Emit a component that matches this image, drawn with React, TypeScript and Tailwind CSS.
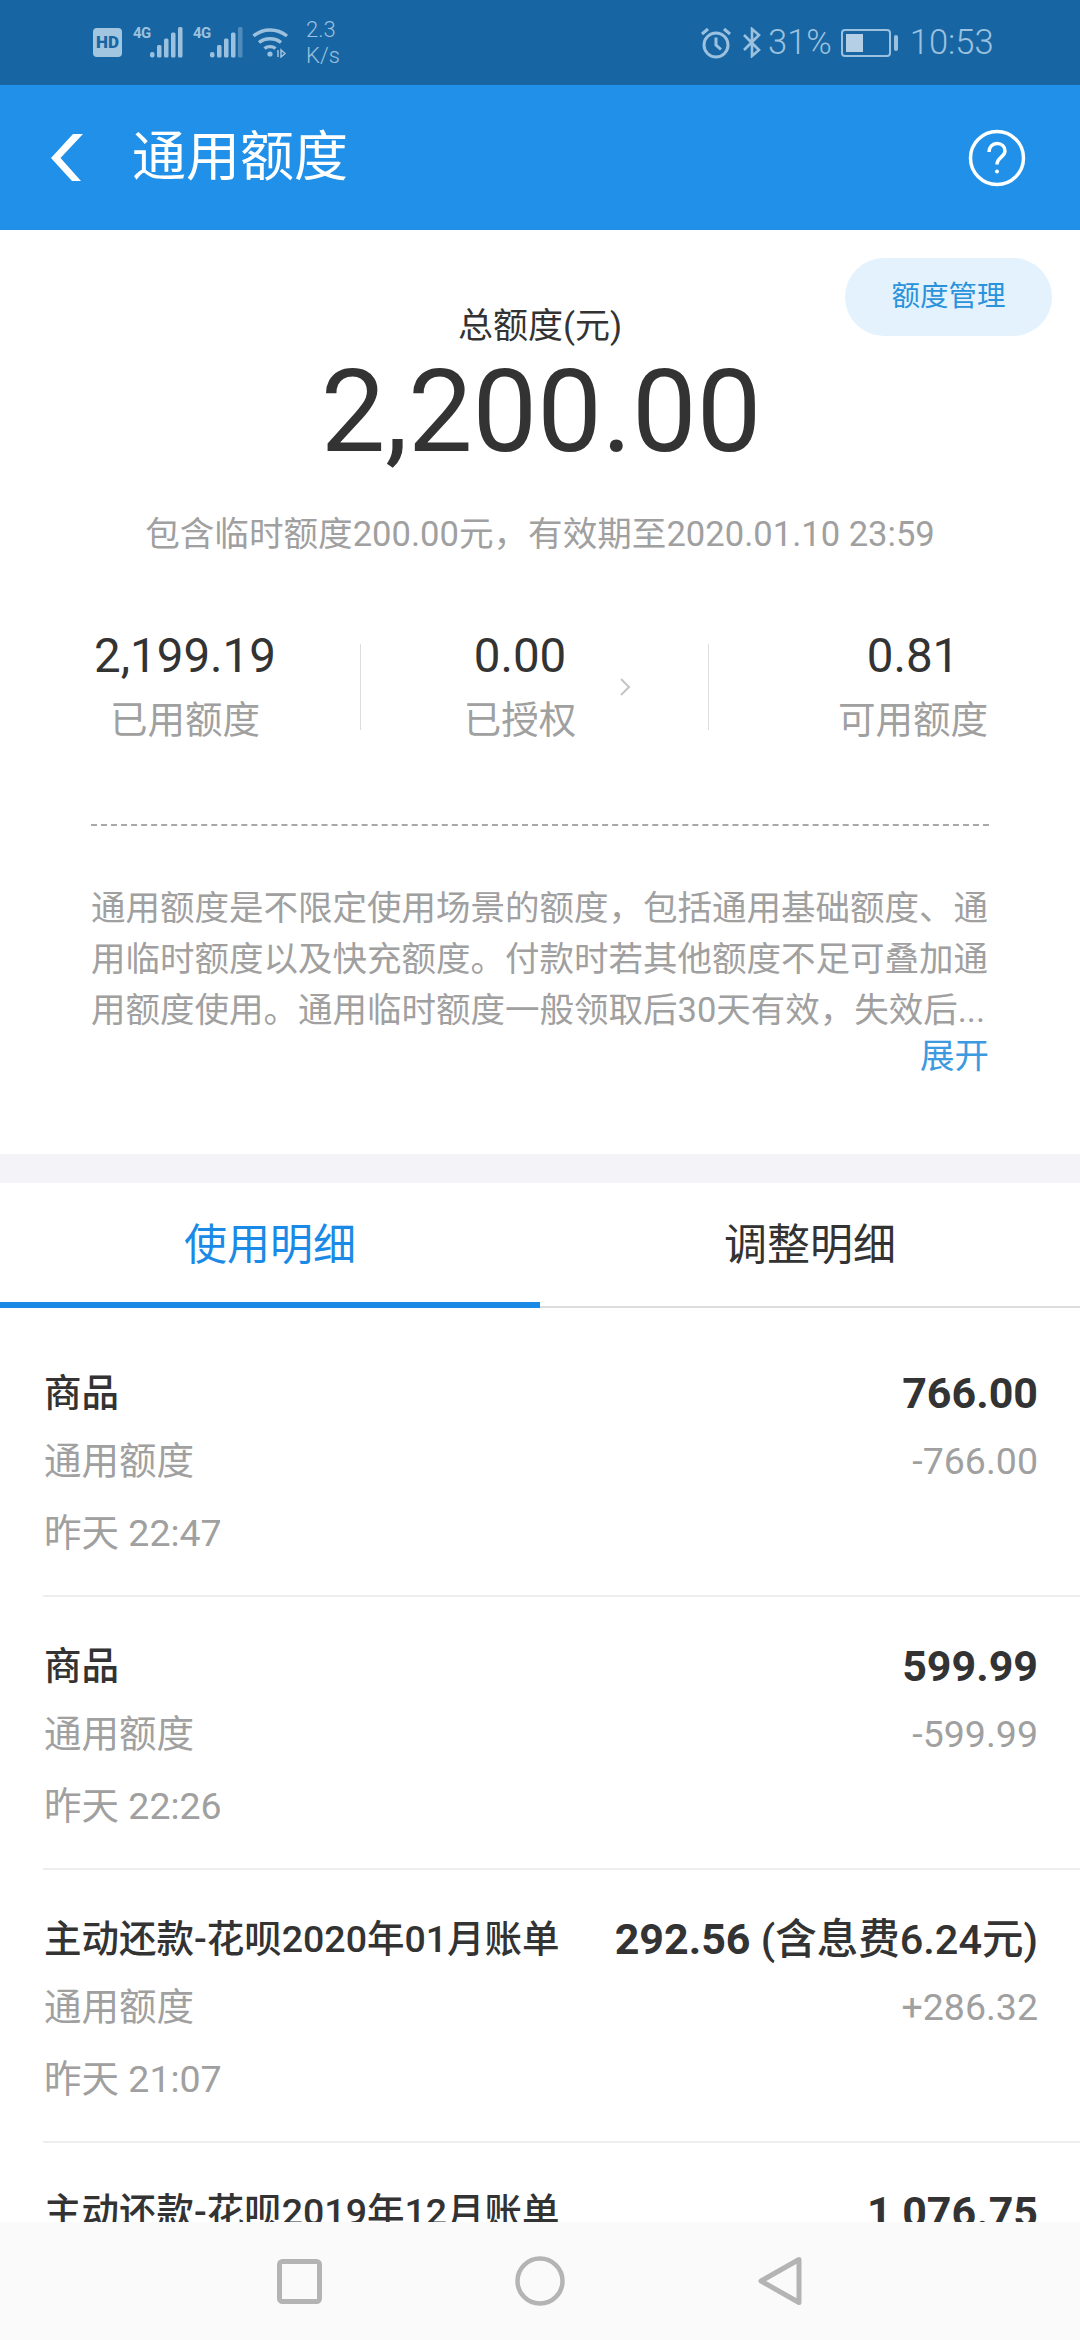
const rows = [
  { title: '商品', amount: '766.00', delta: '-766.00', time: '昨天 22:47' },
  { title: '商品', amount: '599.99', delta: '-599.99', time: '昨天 22:26' },
  { title: '主动还款-花呗2020年01月账单', amount: '292.56', note: ' (含息费6.24元)', delta: '+286.32', time: '昨天 21:07' },
  { title: '主动还款-花呗2019年12月账单', amount: '1,076.75' },
];

function Signal({ last }: { last: string }) {
  return (
    <div className="flex items-start">
      <span className="w-[17px] font-['Roboto'] text-[15px] leading-[15px] font-bold mt-[-1px] tracking-[-0.5px]">4G</span>
      <svg width="34" height="31" viewBox="0 0 34 31" fill="currentColor">
        <rect x="0" y="25" width="4.5" height="5.5" rx="2" />
        <rect x="7" y="18" width="4.5" height="12.5" rx="1.5" />
        <rect x="14" y="11.5" width="4.5" height="19" rx="1.5" />
        <rect x="21" y="5.5" width="4.5" height="25" rx="1.5" />
        <rect x="28" y="0" width="4.5" height="30.5" rx="1.5" fill={last} />
      </svg>
    </div>
  );
}

function StatusBar() {
  return (
    <div className="h-[85px] bg-[#1766a3] text-[#9cc1de] flex items-center font-['Roboto'] shrink-0">
      <div className="ml-[93px] w-[29px] h-[29px] rounded-[4px] bg-[#a3c6e0] text-[#1766a3] flex items-center justify-center text-[17px] font-black leading-none">HD</div>
      <div className="ml-[11px]"><Signal last="#9cc1de" /></div>
      <div className="ml-[9px]"><Signal last="#4f8cbd" /></div>
      <svg width="38" height="31" viewBox="0 0 38 31" fill="none" stroke="currentColor" strokeWidth="3.4" className="ml-[8px]">
        <path d="M1.5 9C11 1 25 1 35 9" />
        <path d="M7 15.5C13 10.5 23 10.5 29 15.5" />
        <path d="M12.5 21.5C15.5 19 20.5 19 23.5 21.5" />
        <circle cx="18" cy="27" r="2.6" fill="currentColor" stroke="none" />
        <path d="M26 23v7M33 26.5l-4-3.5v7z" strokeWidth="1.5" />
      </svg>
      <div className="ml-[16px] text-[22px] leading-[26px] font-light w-[40px]">
        <div>2.3</div>
        <div>K/s</div>
      </div>
      <svg width="32" height="32" viewBox="0 0 32 32" fill="none" stroke="currentColor" strokeWidth="3" className="ml-[354px]">
        <circle cx="16" cy="18" r="12" />
        <path d="M16 10.5V18l5 4.5" />
        <path d="M2 7l6-5M30 7l-6-5" />
      </svg>
      <svg width="20" height="31" viewBox="0 0 20 31" fill="none" stroke="currentColor" strokeWidth="2.6" className="ml-[10px]">
        <path d="M2 8l15 15-7 6V2l7 6L2 23" />
      </svg>
      <span className="ml-[6px] text-[34.5px] leading-none font-light">31%</span>
      <div className="ml-[9px] w-[50px] h-[28px] rounded-[4px] border-2 border-[#9cc1de] p-[3px]">
        <div className="w-[17px] h-full bg-[#b5d0e6]" />
      </div>
      <div className="ml-[3px] w-[4px] h-[16px] rounded-sm bg-[#9cc1de]" />
      <span className="ml-[12px] text-[34.5px] leading-none font-light">10:53</span>
    </div>
  );
}

function Header() {
  return (
    <div className="h-[145px] bg-[#2090e8] text-white flex items-center shrink-0">
      <svg width="36" height="50" viewBox="0 0 36 50" fill="currentColor" className="ml-[48px]">
        <polygon points="3,25 25,1 35,1 12.5,25 33,48 24,48" />
      </svg>
      <span className="ml-[48px] text-[54px] leading-none">通用额度</span>
      <svg width="58" height="58" viewBox="0 0 58 58" fill="none" stroke="currentColor" strokeWidth="3.5" className="ml-auto mr-[54px]">
        <circle cx="29" cy="29" r="26.5" />
        <path d="M21 23c0-5 3.5-8.5 8-8.5s8 3 8 7.5c0 6-8 6.5-8 13.5" />
        <circle cx="29" cy="42.5" r="2" fill="currentColor" stroke="none" />
      </svg>
    </div>
  );
}

function Stat({ value, label }: { value: string; label: string }) {
  return (
    <>
      <div className="text-[47.5px] leading-[56px] text-[#333]">{value}</div>
      <div className="text-[37.5px] leading-[52px] text-[#a0a0a0] mt-[10px]">{label}</div>
    </>
  );
}

export default function App() {
  return (
    <div className="relative w-[1080px] h-[2340px] overflow-hidden bg-white flex flex-col font-['Roboto','Noto_Sans_CJK_SC',sans-serif]">
      <StatusBar />
      <Header />

      <div className="relative h-[924px] shrink-0 flex flex-col">
        <div className="absolute right-[28px] top-[28px] w-[207px] h-[78px] rounded-[39px] bg-[#e3f2fd] text-[#2a93dc] text-[28.5px] flex items-center justify-center">额度管理</div>

        <div className="mt-[72px] text-center text-[35px] leading-[50px] text-[#333]">总额度(元)</div>
        <div className="mt-[-5px] pl-[2px] text-center text-[115px] leading-[130px] text-[#333]">2,200.00</div>
        <div className="mt-[32px] text-center text-[34.6px] leading-[50px] text-[#a0a0a0]">包含临时额度200.00元，有效期至2020.01.10 23:59</div>

        <div className="mt-[78px] ml-[91px] w-[898px] h-[100px] flex items-center text-center">
          <div className="w-[188px] shrink-0">
            <Stat value="2,199.19" label="已用额度" />
          </div>
          <div className="ml-[81px] w-px h-[86px] bg-[#ddd] shrink-0" />
          <div className="w-[318px] shrink-0">
            <Stat value="0.00" label="已授权" />
          </div>
          <svg width="12" height="20" viewBox="0 0 12 20" fill="none" stroke="#c4c4c4" strokeWidth="2" className="ml-[-60px] shrink-0">
            <path d="M2 2l8 8-8 8" />
          </svg>
          <div className="ml-[77px] w-px h-[86px] bg-[#ddd] shrink-0" />
          <div className="ml-[126px] w-[156px] shrink-0">
            <Stat value="0.81" label="可用额度" />
          </div>
        </div>

        <div className="mt-[87px] mx-[91px] border-t-2 border-dashed border-[#a8a8a8]" />

        <div className="mt-[57px] mx-[91px] text-[34.5px] leading-[51px] text-[#a0a0a0]">
          <div className="whitespace-nowrap">通用额度是不限定使用场景的额度，包括通用基础额度、通</div>
          <div className="whitespace-nowrap">用临时额度以及快充额度。付款时若其他额度不足可叠加通</div>
          <div className="whitespace-nowrap">用额度使用。通用临时额度一般领取后30天有效，失效后...</div>
          <div className="text-right text-[#3d9ae0] text-[34.5px] leading-[42px] mt-[-1px]">展开</div>
        </div>
      </div>

      <div className="h-[29px] bg-[#f4f4f8] shrink-0" />

      <div className="relative h-[125px] shrink-0 flex border-b-2 border-[#dcdcdc]">
        <div className="w-1/2 h-[125px] text-center text-[43px] leading-[124px] text-[#1a8ae6] border-b-[6px] border-[#1a8ae6]">使用明细</div>
        <div className="w-1/2 text-center text-[43px] leading-[124px] text-[#333]">调整明细</div>
      </div>

      <div className="pl-[43px] mt-[16px]">
        {rows.map((r) => (
          <div key={r.title + r.amount} className="h-[273px] pt-[44px] border-b-2 border-[#eee] pr-[42px]">
            <div className="flex justify-between items-center h-[50px] text-[#333] font-medium text-[37.5px] pl-[1px]">
              <span>{r.title}</span>
              <span className="whitespace-nowrap text-[41.5px]">
                <span className="text-[43px] font-bold">{r.amount}</span>
                {r.note}
              </span>
            </div>
            {r.delta && (
              <>
                <div className="flex justify-between items-center h-[50px] mt-[18px] text-[#a0a0a0] text-[37.5px] pl-[1px]">
                  <span>通用额度</span>
                  <span>{r.delta}</span>
                </div>
                <div className="h-[50px] mt-[22px] leading-[50px] text-[#a0a0a0] text-[37.5px] pl-[1px]">{r.time}</div>
              </>
            )}
          </div>
        ))}
      </div>

      <div className="absolute left-0 right-0 bottom-0 h-[118px] bg-[#fafafa] flex items-center justify-center">
        <div className="w-[540px] flex items-center justify-between pl-[7px] pr-[8px]">
          <svg width="45" height="45" viewBox="0 0 45 45" fill="none" stroke="#b4b4b4" strokeWidth="5">
            <rect x="2.5" y="2.5" width="40" height="40" rx="3" />
          </svg>
          <svg width="50" height="50" viewBox="0 0 50 50" fill="none" stroke="#b4b4b4" strokeWidth="4.5">
            <circle cx="25" cy="25" r="22.5" />
          </svg>
          <svg width="44" height="50" viewBox="0 0 44 50" fill="none" stroke="#b4b4b4" strokeWidth="5" strokeLinejoin="round">
            <path d="M41 3.5v43L3 25z" />
          </svg>
        </div>
      </div>
    </div>
  );
}
